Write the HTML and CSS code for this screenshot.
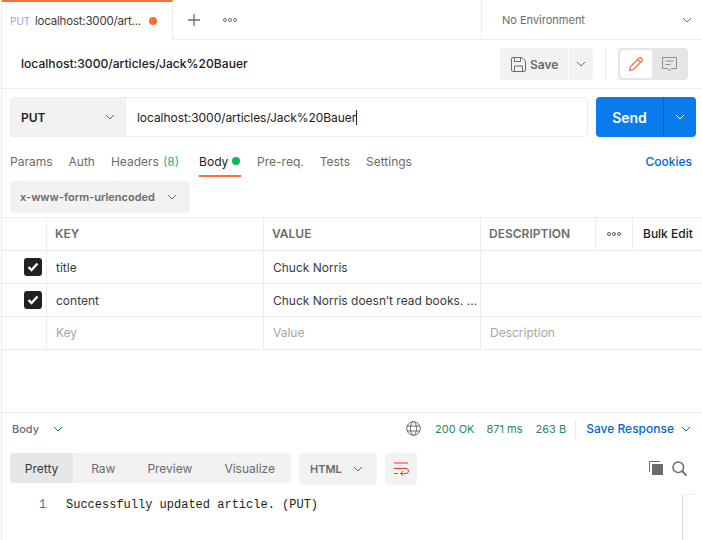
FILE: index.html
```html
<!DOCTYPE html>
<html lang="en">
<head>
    <meta charset="UTF-8">
    <meta name="viewport" content="width=device-width, initial-scale=1.0">
    <title>Postman request</title>
    <link rel="stylesheet" href="styles.css">
</head>
<body>
<div class="app">

    <div class="tabbar">
        <div class="tab">
            <span class="tab-method">PUT</span>
            <span class="tab-name">localhost:3000/art...</span>
            <span class="tab-dot"></span>
        </div>
        <svg class="tab-plus" width="14" height="14" viewBox="0 0 14 14"><path d="M7 1v12M1 7h12" stroke="#6b6b6b" stroke-width="1.3" fill="none"/></svg>
        <svg class="tab-more" width="14" height="4" viewBox="0 0 14 4"><g fill="none" stroke="#555" stroke-width="0.8"><circle cx="2" cy="2" r="1.5"/><circle cx="7" cy="2" r="1.5"/><circle cx="12" cy="2" r="1.5"/></g></svg>
        <div class="env">
            <span>No Environment</span>
            <svg width="10" height="6" viewBox="0 0 10 6"><path d="M1 1l4 4 4-4" stroke="#6b6b6b" fill="none"/></svg>
        </div>
    </div>

    <div class="titlebar">
        <div class="title">localhost:3000/articles/Jack%20Bauer</div>
        <div class="save-group">
            <div class="save-btn">
                <svg width="15" height="15" viewBox="0 0 15 15"><g fill="none" stroke="#6b6b6b" stroke-width="1"><path d="M.5 2a1.5 1.5 0 0 1 1.5-1.5h9l3.500 3.500v9a1.500 1.500 0 0 1-1.500 1.500h-11a1.500 1.500 0 0 1-1.500-1.500z"/><path d="M3.500.5v4h6v-4M3.500 14.500v-5.500h8v5.500"/></g></svg>
                <span>Save</span>
            </div>
            <div class="save-arrow">
                <svg width="10" height="6" viewBox="0 0 10 6"><path d="M1 1l4 4 4-4" stroke="#6b6b6b" fill="none"/></svg>
            </div>
        </div>
        <div class="title-divider"></div>
        <div class="toggle">
            <div class="toggle-on">
                <svg width="16" height="16" viewBox="0 0 16 16"><path d="M1.500 14.500l1-4 8.500-8.500a1.400 1.400 0 0 1 2 0l1 1a1.400 1.400 0 0 1 0 2l-8.500 8.500zM9.500 3.500l3 3" fill="none" stroke="#f26b3a" stroke-width="1.100"/></svg>
            </div>
            <div class="toggle-off">
                <svg width="15" height="15" viewBox="0 0 15 15"><path d="M.5.500h14v11h-5l-2 2-2-2h-5zM3.500 4h8M3.500 7.500h5" fill="none" stroke="#8f8f8f"/></svg>
            </div>
        </div>
    </div>

    <div class="request">
        <div class="url-box">
            <div class="method">
                <span>PUT</span>
                <svg width="10" height="6" viewBox="0 0 10 6"><path d="M1 1l4 4 4-4" stroke="#6b6b6b" fill="none"/></svg>
            </div>
            <div class="url"><span>localhost:3000/articles/Jack%20Bauer</span><i class="caret"></i></div>
        </div>
        <div class="send">
            <div class="send-main">Send</div>
            <div class="send-arrow">
                <svg width="10" height="6" viewBox="0 0 10 6"><path d="M1 1l4 4 4-4" stroke="#fff" fill="none"/></svg>
            </div>
        </div>
    </div>

    <div class="req-tabs">
        <span class="req-tab">Params</span>
        <span class="req-tab">Auth</span>
        <span class="req-tab">Headers <em class="count">(8)</em></span>
        <span class="req-tab active">Body <i class="green-dot"></i></span>
        <span class="req-tab">Pre-req.</span>
        <span class="req-tab">Tests</span>
        <span class="req-tab">Settings</span>
        <span class="cookies">Cookies</span>
    </div>

    <div class="body-type">
        <div class="body-select">
            <span>x-www-form-urlencoded</span>
            <svg width="10" height="6" viewBox="0 0 10 6"><path d="M1 1l4 4 4-4" stroke="#6b6b6b" fill="none"/></svg>
        </div>
    </div>

    <div class="params">
        <div class="row head">
            <div class="cell"></div>
            <div class="cell">KEY</div>
            <div class="cell">VALUE</div>
            <div class="cell">DESCRIPTION</div>
            <div class="cell center">
                <svg width="14" height="4" viewBox="0 0 14 4"><g fill="none" stroke="#333" stroke-width="0.8"><circle cx="2" cy="2" r="1.500"/><circle cx="7" cy="2" r="1.500"/><circle cx="12" cy="2" r="1.500"/></g></svg>
            </div>
            <div class="cell bulk">Bulk Edit</div>
        </div>
        <div class="row">
            <div class="cell check-cell"><span class="check"><svg width="12" height="10" viewBox="0 0 12 10"><path d="M1.500 5l3 3 6-6.500" fill="none" stroke="#fff" stroke-width="2.400"/></svg></span></div>
            <div class="cell">title</div>
            <div class="cell">Chuck Norris</div>
            <div class="cell wide"></div>
        </div>
        <div class="row">
            <div class="cell check-cell"><span class="check"><svg width="12" height="10" viewBox="0 0 12 10"><path d="M1.500 5l3 3 6-6.500" fill="none" stroke="#fff" stroke-width="2.400"/></svg></span></div>
            <div class="cell">content</div>
            <div class="cell">Chuck Norris doesn’t read books. ...</div>
            <div class="cell wide"></div>
        </div>
        <div class="row empty">
            <div class="cell"></div>
            <div class="cell">Key</div>
            <div class="cell">Value</div>
            <div class="cell wide">Description</div>
        </div>
    </div>

    <div class="response">
        <div class="res-head">
            <span class="res-label">Body</span>
            <svg class="res-chevron" width="10" height="6" viewBox="0 0 10 6"><path d="M1 1l4 4 4-4" stroke="#0265d2" fill="none"/></svg>
            <div class="res-meta">
                <svg width="15" height="15" viewBox="0 0 15 15"><g fill="none" stroke="#6b6b6b"><circle cx="7.500" cy="7.500" r="6.800"/><ellipse cx="7.500" cy="7.500" rx="3" ry="6.800"/><path d="M1 5h13M1 10h13"/></g></svg>
                <span class="ok status">200 OK</span>
                <span class="ok time">871 ms</span>
                <span class="ok size">263 B</span>
                <i class="res-divider"></i>
                <span class="save-res">Save Response</span>
                <svg width="10" height="6" viewBox="0 0 10 6"><path d="M1 1l4 4 4-4" stroke="#0265d2" fill="none"/></svg>
            </div>
        </div>
        <div class="res-tools">
            <div class="views">
                <span class="view on">Pretty</span>
                <span class="view raw">Raw</span>
                <span class="view">Preview</span>
                <span class="view">Visualize</span>
            </div>
            <div class="format">
                <span>HTML</span>
                <svg width="10" height="6" viewBox="0 0 10 6"><path d="M1 1l4 4 4-4" stroke="#6b6b6b" fill="none"/></svg>
            </div>
            <div class="wrap">
                <svg width="16" height="14" viewBox="0 0 16 14"><path d="M1 1h14M1 6.500h12a2.500 2.500 0 0 1 0 5H8M10 9l-2.500 2.500L10 14M1 11.500h4" fill="none" stroke="#d9431e" stroke-width="1"/></svg>
            </div>
            <div class="res-icons">
                <svg width="14" height="14" viewBox="0 0 14 14"><path d="M3 3h11v11H3z" fill="#6b6b6b"/><path d="M.5 11V.5h10.500" fill="none" stroke="#6b6b6b" stroke-width="1"/></svg>
                <svg width="15" height="15" viewBox="0 0 15 15"><circle cx="6.300" cy="6.300" r="5.300" fill="none" stroke="#6b6b6b" stroke-width="1.500"/><path d="M10 10l4.500 4.500" stroke="#6b6b6b" stroke-width="1.800"/></svg>
            </div>
        </div>
        <div class="code">
            <span class="line-no">1</span>
            <span class="code-text">Successfully updated article. (PUT)</span>
            <div class="minimap"></div>
        </div>
    </div>

</div>
</body>
</html>
```

FILE: styles.css
```css
* {
    box-sizing: border-box;
}
html, body {
    margin: 0;
    height: 540px;
    overflow: hidden;
    background: #fff;
}
body {
    font-family: Inter, "Liberation Sans", sans-serif;
    font-size: 12px;
    color: #212121;
}
svg {
    display: block;
    flex: none;
}
.app {
    margin-left: 1px;
    height: 540px;
    border-left: 1px solid #ededed;
    display: flex;
    flex-direction: column;
}

/* tabs */
.tabbar {
    height: 40px;
    flex: none;
    display: flex;
    align-items: center;
    border-bottom: 1px solid #ededed;
}
.tab {
    width: 171px;
    height: 40px;
    margin-bottom: -1px;
    padding-left: 8px;
    display: flex;
    align-items: center;
    background: #fff;
    border-top: 2px solid #ff6c37;
    border-right: 1px solid #ededed;
    position: relative;
}
.tab-method {
    width: 25px;
    font-size: 10px;
    color: #9a9ae6;
}
.tab-name {
    width: 114px;
    font-size: 11.500px;
    letter-spacing: -0.2px;
    color: #3a3a3a;
    white-space: nowrap;
}
.tab-dot {
    width: 8px;
    height: 8px;
    border-radius: 50%;
    background: #ff6c37;
}
.tab-plus {
    margin-left: 14px;
}
.tab-more {
    margin-left: 22px;
}
.env {
    margin-left: auto;
    width: 221px;
    height: 39px;
    padding: 0 10px 0 20px;
    display: flex;
    align-items: center;
    justify-content: space-between;
    border-left: 1px solid #ededed;
    font-size: 11px;
    color: #6b6b6b;
}

/* title */
.titlebar {
    height: 49px;
    flex: none;
    display: flex;
    align-items: center;
    padding: 0 14px 0 19px;
    border-bottom: 1px solid #ededed;
}
.title {
    flex: 1;
    font-size: 12.100px;
    font-weight: 500;
    margin-bottom: 2px;
}
.save-group {
    display: flex;
    height: 32px;
    gap: 1px;
}
.save-btn {
    width: 68px;
    padding-left: 11px;
    display: flex;
    align-items: center;
    gap: 4px;
    background: #f2f2f2;
    border-radius: 4px 0 0 4px;
    font-weight: 600;
    color: #6b6b6b;
}
.save-arrow {
    width: 24px;
    display: flex;
    align-items: center;
    justify-content: center;
    background: #f2f2f2;
    border-radius: 0 4px 4px 0;
}
.title-divider {
    width: 1px;
    height: 32px;
    margin: 0 12px;
    background: #ededed;
}
.toggle {
    width: 70px;
    height: 32px;
    padding: 2px;
    display: flex;
    background: #e6e6e6;
    border-radius: 4px;
}
.toggle-on, .toggle-off {
    width: 32px;
    display: flex;
    align-items: center;
    justify-content: center;
}
.toggle-on {
    background: #fff;
    border-radius: 3px;
}
.toggle-off {
    width: 34px;
}

/* request line */
.request {
    flex: none;
    display: flex;
    gap: 8px;
    padding: 8px 6px 0 8px;
}
.url-box {
    width: 578px;
    height: 40px;
    display: flex;
    border: 1px solid #ededed;
    border-radius: 4px;
}
.method {
    width: 115px;
    padding: 0 10px;
    display: flex;
    align-items: center;
    justify-content: space-between;
    background: #f2f2f2;
    border-right: 1px solid #ededed;
    font-weight: 600;
    border-radius: 3px 0 0 3px;
}
.url {
    flex: 1;
    padding-left: 11px;
    display: flex;
    align-items: center;
    letter-spacing: -0.05px;
}
.caret {
    width: 1px;
    height: 15px;
    background: #212121;
}
.send {
    width: 100px;
    height: 40px;
    display: flex;
    background: #097bed;
    border-radius: 4px;
    color: #fff;
}
.send-main {
    width: 68px;
    display: flex;
    align-items: center;
    justify-content: center;
    font-size: 14px;
    font-weight: 600;
    border-right: 1px solid #0265d2;
}
.send-arrow {
    flex: 1;
    display: flex;
    align-items: center;
    justify-content: center;
}

/* request tabs */
.req-tabs {
    height: 40px;
    flex: none;
    display: flex;
    padding: 0 10px 0 8px;
    gap: 16px;
}
.req-tab {
    display: flex;
    align-items: center;
    gap: 4px;
    height: 40px;
    padding-top: 8px;
    color: #6b6b6b;
    white-space: nowrap;
}
.req-tab.active {
    width: 42px;
    margin: 0 0 0 4px;
    padding-top: 10px;
    color: #212121;
    border-bottom: 2px solid #ff6c37;
}
.count {
    font-style: normal;
    color: #26b47f;
}
.green-dot {
    width: 8px;
    height: 8px;
    border-radius: 50%;
    background: #0cbb52;
}
.cookies {
    margin: 8px 0 0 auto;
    align-self: center;
    font-weight: 500;
    color: #0265d2;
}

/* body type */
.body-type {
    flex: none;
    padding: 4px 0 4px 8px;
}
.body-select {
    width: 180px;
    height: 32px;
    padding: 0 13px 0 10px;
    display: flex;
    align-items: center;
    justify-content: space-between;
    background: #f2f2f2;
    border-radius: 4px;
    font-size: 11px;
    font-weight: 600;
    color: #6b6b6b;
}

/* params table */
.params {
    flex: none;
    border-top: 1px solid #ededed;
}
.row {
    height: 33px;
    display: grid;
    grid-template-columns: 45px 217px 217px 115px 37px 1fr;
    border-bottom: 1px solid #ededed;
}
.cell {
    padding-left: 9px;
    display: flex;
    align-items: center;
    border-right: 1px solid #ededed;
    white-space: nowrap;
    overflow: hidden;
    color: #3a3a3a;
}
.row .cell:last-child {
    border-right: 0;
}
.head .cell {
    padding: 0 0 2px 8px;
    font-weight: 600;
    color: #6b6b6b;
}
.head .cell.center {
    padding: 0;
    justify-content: center;
}
.head .cell.bulk {
    padding-left: 10px;
    color: #212121;
    font-weight: 500;
}
.wide {
    grid-column: span 3;
}
.check-cell {
    padding: 0 0 0 22px;
}
.check {
    width: 18px;
    height: 18px;
    display: flex;
    align-items: center;
    justify-content: center;
    background: #212121;
    border-radius: 3px;
}
.empty .cell {
    padding-bottom: 2px;
    color: #a6a6a6;
}

/* response */
.response {
    margin-top: 62px;
    flex: 1;
    border-top: 1px solid #ededed;
}
.res-head {
    height: 31px;
    display: flex;
    align-items: center;
    padding: 0 11px 0 10px;
}
.res-label {
    font-size: 11px;
    font-weight: 500;
    color: #6b6b6b;
}
.res-chevron {
    margin-left: 14px;
}
.res-meta {
    margin-left: auto;
    display: flex;
    align-items: center;
    font-size: 11px;
}
.ok {
    color: #1f8a5a;
}
.status {
    margin-left: 14px;
}
.time {
    margin-left: 12px;
}
.size {
    margin-left: 13px;
}
.res-divider {
    width: 1px;
    height: 20px;
    margin: 0 10px 0 9px;
    background: #ededed;
}
.save-res {
    margin-right: 7px;
    font-size: 12px;
    font-weight: 500;
    color: #0265d2;
}
.res-tools {
    height: 32px;
    margin-top: 9px;
    padding: 0 15px 0 8px;
    display: flex;
    gap: 8px;
}
.views {
    height: 30px;
    width: 281px;
    display: flex;
    background: #f2f2f2;
    border-radius: 4px;
    color: #6b6b6b;
}
.view {
    display: flex;
    align-items: center;
    padding: 0 16px;
}
.view.raw {
    margin-left: 2px;
}
.view.on {
    width: 66px;
    justify-content: center;
    padding: 0;
    background: #e6e6e6;
    color: #3a3a3a;
    border-radius: 4px 0 0 4px;
}
.format {
    width: 78px;
    padding: 0 14px 0 11px;
    display: flex;
    align-items: center;
    justify-content: space-between;
    background: #f2f2f2;
    border-radius: 4px;
    font-size: 11px;
    font-weight: 600;
    color: #6b6b6b;
}
.wrap {
    width: 32px;
    display: flex;
    align-items: center;
    justify-content: center;
    background: #f2f2f2;
    border-radius: 4px;
}
.res-icons {
    margin-left: auto;
    height: 30px;
    display: flex;
    align-items: center;
    gap: 9px;
}
.code {
    padding: 12px 0 0 37px;
    height: 60px;
    display: flex;
    font-family: "Liberation Mono", monospace;
    font-size: 12px;
    line-height: 16px;
    position: relative;
}
.line-no {
    width: 27px;
    color: #2a7ab0;
}
.code-text {
    color: #212121;
}
.minimap {
    position: absolute;
    left: 680px;
    top: 9px;
    width: 14px;
    height: 50px;
    border-left: 1px solid #d9d9d9;
    border-top: 1px solid #ededed;
}
```
